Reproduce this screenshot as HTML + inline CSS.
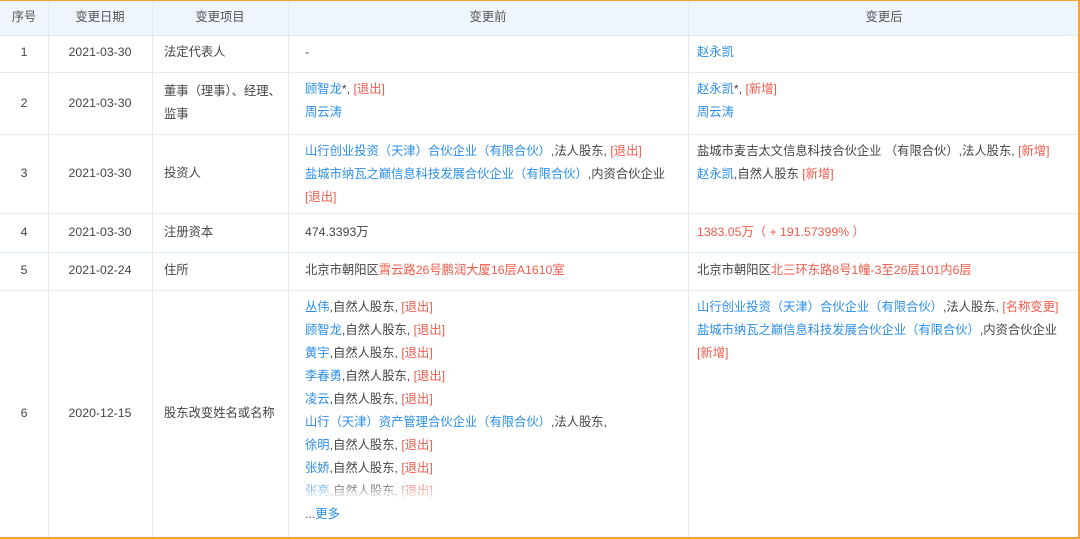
<!DOCTYPE html><html><head><meta charset="utf-8"><style>
*{margin:0;padding:0;box-sizing:border-box}
body{width:1080px;height:539px;overflow:hidden;background:#fff;font-family:"Liberation Sans","Noto Sans CJK SC",sans-serif;font-size:12.3px;color:#444;position:relative}
.frame{position:absolute;left:0;top:0;width:1080px;height:539px;border:2px solid #f7a33a;border-left:none;border-top:1px solid #f7a33a;z-index:5;pointer-events:none}
.hd{position:absolute;left:0;top:0;width:1080px;height:35px;background:#eef5fc}
.vl{position:absolute;top:0;height:539px;width:1px;background:#e2ecf7}
.hl{position:absolute;left:0;width:1080px;height:1px;background:#e2ecf7}
.t{position:absolute;line-height:23px;white-space:nowrap}
.c{text-align:center}
.b{color:#2a8ee8}.r{color:#f05a4a}.g{color:#555}
.fade{background:linear-gradient(#fff0,#fff);}
</style></head><body>
<div class="hd"></div>
<div class="vl" style="left:48px"></div><div class="vl" style="left:152px"></div><div class="vl" style="left:288px"></div><div class="vl" style="left:688px"></div>
<div class="hl" style="top:35px"></div><div class="hl" style="top:72px"></div><div class="hl" style="top:134px"></div><div class="hl" style="top:213px"></div><div class="hl" style="top:252px"></div><div class="hl" style="top:290px"></div>
<div class="t c g" style="left:0;width:48px;top:6px">序号</div>
<div class="t c g" style="left:48px;width:104px;top:6px">变更日期</div>
<div class="t c g" style="left:152px;width:136px;top:6px">变更项目</div>
<div class="t c g" style="left:288px;width:400px;top:6px">变更前</div>
<div class="t c g" style="left:688px;width:392px;top:6px">变更后</div>

<div class="t c" style="left:0;width:48px;top:41px">1</div><div class="t c" style="left:48px;width:104px;top:41px">2021-03-30</div><div class="t" style="left:164px;top:41px">法定代表人</div><div class="t" style="left:305px;top:41px">-</div><div class="t b" style="left:697px;top:41px">赵永凯</div>

<div class="t c" style="left:0;width:48px;top:92px">2</div><div class="t c" style="left:48px;width:104px;top:92px">2021-03-30</div><div class="t" style="left:164px;top:80px">董事（理事）、经理、<br>监事</div>
<div class="t" style="left:305px;top:78px"><span class="b">顾智龙</span>*, <span class="r">[退出]</span><br><span class="b">周云涛</span></div>
<div class="t" style="left:697px;top:78px"><span class="b">赵永凯</span>*, <span class="r">[新增]</span><br><span class="b">周云涛</span></div>

<div class="t c" style="left:0;width:48px;top:162px">3</div><div class="t c" style="left:48px;width:104px;top:162px">2021-03-30</div><div class="t" style="left:164px;top:162px">投资人</div>
<div class="t" style="left:305px;top:140px"><span class="b">山行创业投资（天津）合伙企业（有限合伙）</span>,法人股东, <span class="r">[退出]</span><br><span class="b">盐城市纳瓦之巅信息科技发展合伙企业（有限合伙）</span>,内资合伙企业<br><span class="r">[退出]</span></div>
<div class="t" style="left:697px;top:140px">盐城市麦吉太文信息科技合伙企业 （有限合伙）,法人股东, <span class="r">[新增]</span><br><span class="b">赵永凯</span>,自然人股东 <span class="r">[新增]</span></div>

<div class="t c" style="left:0;width:48px;top:221px">4</div><div class="t c" style="left:48px;width:104px;top:221px">2021-03-30</div><div class="t" style="left:164px;top:221px">注册资本</div><div class="t" style="left:305px;top:221px">474.3393万</div><div class="t r" style="left:697px;top:221px">1383.05万（ + 191.57399% ）</div>

<div class="t c" style="left:0;width:48px;top:259px">5</div><div class="t c" style="left:48px;width:104px;top:259px">2021-02-24</div><div class="t" style="left:164px;top:259px">住所</div><div class="t" style="left:305px;top:259px">北京市朝阳区<span class="r">霄云路26号鹏润大厦16层A1610室</span></div><div class="t" style="left:697px;top:259px">北京市朝阳区<span class="r">北三环东路8号1幢-3至26层101内6层</span></div>

<div class="t c" style="left:0;width:48px;top:402px">6</div><div class="t c" style="left:48px;width:104px;top:402px">2020-12-15</div><div class="t" style="left:164px;top:402px">股东改变姓名或名称</div>
<div class="t" style="left:305px;top:296px"><span class="b">丛伟</span>,自然人股东, <span class="r">[退出]</span><br><span class="b">顾智龙</span>,自然人股东, <span class="r">[退出]</span><br><span class="b">黄宇</span>,自然人股东, <span class="r">[退出]</span><br><span class="b">李春勇</span>,自然人股东, <span class="r">[退出]</span><br><span class="b">凌云</span>,自然人股东, <span class="r">[退出]</span><br><span class="b">山行（天津）资产管理合伙企业（有限合伙）</span>,法人股东,<br><span class="b">徐明</span>,自然人股东, <span class="r">[退出]</span><br><span class="b">张娇</span>,自然人股东, <span class="r">[退出]</span><br><span class="b">张亮</span>,自然人股东, <span class="r">[退出]</span><br><span class="g">...</span><span class="b">更多</span></div>
<div class="fade" style="position:absolute;left:300px;top:480px;width:200px;height:20px"></div>
<div class="t" style="left:697px;top:296px"><span class="b">山行创业投资（天津）合伙企业（有限合伙）</span>,法人股东, <span class="r">[名称变更]</span><br><span class="b">盐城市纳瓦之巅信息科技发展合伙企业（有限合伙）</span>,内资合伙企业<br><span class="r">[新增]</span></div>
<div class="frame"></div>
</body></html>
